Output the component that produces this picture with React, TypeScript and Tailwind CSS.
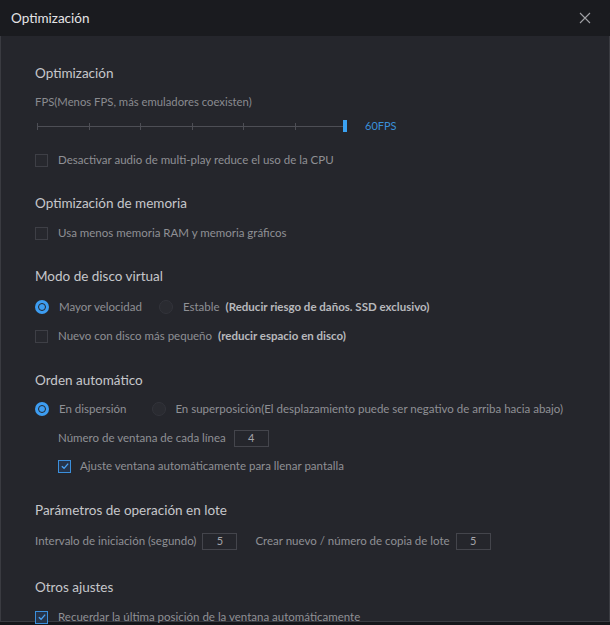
import React from "react";

const font = { fontFamily: 'Lato, "Liberation Sans", Arial, sans-serif' };

function Checkbox({ checked = false }: { checked?: boolean }) {
  return (
    <span
      className={
        "flex h-[13px] w-[13px] shrink-0 items-center justify-center border " +
        (checked ? "border-[#3b8fdc] bg-[#26344a]" : "border-[#3e3f46] bg-[#27282e]")
      }
    >
      {checked && (
        <svg viewBox="0 0 12 12" className="h-[10px] w-[10px]" fill="none">
          <path d="M2.2 6.2 4.9 8.8 9.8 3.2" stroke="#4aa3f5" strokeWidth="1.6" />
        </svg>
      )}
    </span>
  );
}

function Radio({ checked = false }: { checked?: boolean }) {
  return checked ? (
    <span className="flex h-[14px] w-[14px] shrink-0 items-center justify-center rounded-full bg-[#3d9df2]">
      <span className="block h-[8px] w-[8px] rounded-full border-[1.5px] border-[#25262c] bg-[#3d9df2]" />
    </span>
  ) : (
    <span className="block h-[14px] w-[14px] shrink-0 rounded-full border border-[#33343b] bg-[#2a2b31]" />
  );
}

function Box({ value }: { value: string }) {
  return (
    <span className="flex h-[17px] w-[35px] items-center justify-center border border-[#44454c] text-[11px] text-[#a4a5aa]">
      {value}
    </span>
  );
}

function Heading({ children, className = "" }: { children: React.ReactNode; className?: string }) {
  return (
    <div className={"flex h-5 items-center text-[13.5px] text-[#c6c7cb] " + className}>{children}</div>
  );
}

function Row({ children, className = "" }: { children: React.ReactNode; className?: string }) {
  return (
    <div className={"flex h-5 items-center text-[11.5px] text-[#8f9095] " + className}>{children}</div>
  );
}

function Slider() {
  const ticks = [0, 1, 2, 3, 4, 5];
  return (
    <div className="flex h-5 items-center">
      <div className="relative ml-[2px] h-[12px] w-[310px]">
        <div className="absolute left-0 right-[4px] top-[6px] h-px bg-[#4d4e55]" />
        {ticks.map((t) => (
          <div
            key={t}
            className="absolute top-[3px] h-[7px] w-px bg-[#4d4e55]"
            style={{ left: t * 51.6 }}
          />
        ))}
        <div className="absolute right-0 top-0 h-[12px] w-[4px] bg-[#3aa2f3]" />
      </div>
      <span className="ml-[18px] text-[11px] text-[#3a8fd8]">60FPS</span>
    </div>
  );
}

export default function App() {
  return (
    <div className="h-[625px] w-[610px] overflow-hidden bg-[#15161a]" style={font}>
      <div className="flex h-9 items-center justify-between bg-[#1a1b1f] pl-[11px] pr-[19px]">
        <span className="text-[13.5px] text-[#e4e4e6]">Optimización</span>
        <svg viewBox="0 0 12 12" className="h-[12px] w-[12px]" fill="none">
          <path d="M1 1 11 11M11 1 1 11" stroke="#a0a1a5" strokeWidth="1.1" />
        </svg>
      </div>
      <div className="h-[586px] border-x border-b border-[#3a3b41] bg-[#25262c] pl-[34px] pt-[27px]">
        <Heading>Optimización</Heading>
        <div className="mt-[9px] flex h-5 items-center text-[11.3px] text-[#8a8b90]">
          FPS(Menos FPS, más emuladores coexisten)
        </div>
        <div className="mt-[4px]">
          <Slider />
        </div>
        <Row className="mt-[14px] gap-[10px]">
          <Checkbox />
          <span>Desactivar audio de multi-play reduce el uso de la CPU</span>
        </Row>

        <Heading className="mt-[23px]">Optimización de memoria</Heading>
        <Row className="mt-[10px] gap-[10px]">
          <Checkbox />
          <span>Usa menos memoria RAM y memoria gráficos</span>
        </Row>

        <Heading className="mt-[23px]">Modo de disco virtual</Heading>
        <Row className="mt-[11px]">
          <Radio checked />
          <span className="ml-[10px]">Mayor velocidad</span>
          <span className="ml-[17px] flex">
            <Radio />
          </span>
          <span className="ml-[10px]">Estable</span>
          <span className="ml-[6px] font-bold text-[#b8b9bd]">(Reducir riesgo de daños. SSD exclusivo)</span>
        </Row>
        <Row className="mt-[9px]">
          <Checkbox />
          <span className="ml-[10px]">Nuevo con disco más pequeño</span>
          <span className="ml-[6px] font-bold text-[#b8b9bd]">(reducir espacio en disco)</span>
        </Row>

        <Heading className="mt-[24px]">Orden automático</Heading>
        <Row className="mt-[9px]">
          <Radio checked />
          <span className="ml-[10px]">En dispersión</span>
          <span className="ml-[26px] flex">
            <Radio />
          </span>
          <span className="ml-[9px]">En superposición(El desplazamiento puede ser negativo de arriba hacia abajo)</span>
        </Row>
        <Row className="mt-[9px] pl-[23px]">
          <span>Número de ventana de cada línea</span>
          <span className="ml-[8px] flex">
            <Box value="4" />
          </span>
        </Row>
        <Row className="mt-[8px] gap-[9px] pl-[23px]">
          <Checkbox checked />
          <span>Ajuste ventana automáticamente para llenar pantalla</span>
        </Row>

        <Heading className="mt-[24px]">Parámetros de operación en lote</Heading>
        <Row className="mt-[11px]">
          <span>Intervalo de iniciación (segundo)</span>
          <span className="ml-[6px] flex">
            <Box value="5" />
          </span>
          <span className="ml-[18px]">Crear nuevo / número de copia de lote</span>
          <span className="ml-[6px] flex">
            <Box value="5" />
          </span>
        </Row>

        <Heading className="mt-[26px]">Otros ajustes</Heading>
        <Row className="mt-[10px] gap-[10px]">
          <Checkbox checked />
          <span>Recuerdar la última posición de la ventana automáticamente</span>
        </Row>
      </div>
    </div>
  );
}
